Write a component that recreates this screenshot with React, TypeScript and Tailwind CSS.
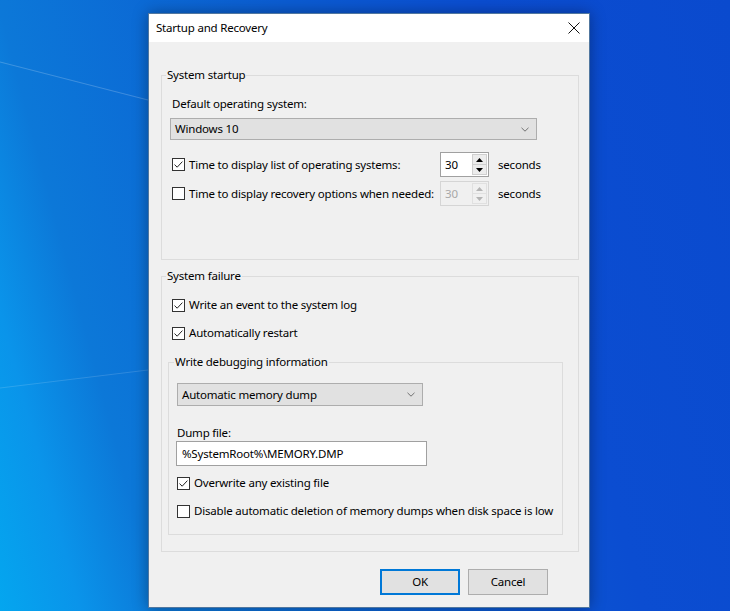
import type { ReactNode } from "react";

function Wallpaper() {
  return (
    <svg className="absolute inset-0" width="730" height="611" viewBox="0 0 730 611">
      <line x1="0" y1="62" x2="148" y2="100" stroke="rgba(255,255,255,0.2)" strokeWidth="1.2" />
      <line x1="0" y1="388" x2="148" y2="370" stroke="rgba(255,255,255,0.14)" strokeWidth="1.2" />
    </svg>
  );
}

function CheckBox({ checked = false }: { checked?: boolean }) {
  return (
    <svg width="13" height="13" viewBox="0 0 13 13" className="shrink-0">
      <rect x="0.5" y="0.5" width="12" height="12" fill="#fff" stroke="#333" />
      {checked && (
        <path d="M2.5 6.6 L5.2 9.2 L10.4 3.6" fill="none" stroke="#222" strokeWidth="1" />
      )}
    </svg>
  );
}

function CheckRow({ checked, children, className = "" }: { checked?: boolean; children: ReactNode; className?: string }) {
  return (
    <label className={`flex h-4 items-center gap-[4px] whitespace-nowrap ${className}`}>
      <CheckBox checked={checked} />
      <span>{children}</span>
    </label>
  );
}

function Chevron() {
  return (
    <svg width="8" height="5" viewBox="0 0 8 5">
      <path d="M0.5 0.8 L4 4.2 L7.5 0.8" fill="none" stroke="#707070" strokeWidth="1" />
    </svg>
  );
}

function ComboBox({ value, className }: { value: string; className: string }) {
  return (
    <div className={`flex items-center justify-between border border-[#adadad] bg-[#e1e1e1] pl-[4px] pr-[7px] ${className}`}>
      <span>{value}</span>
      <Chevron />
    </div>
  );
}

function Arrow({ up, color }: { up?: boolean; color: string }) {
  return (
    <svg width="7" height="4" viewBox="0 0 7 4">
      <path d={up ? "M0 4 L3.5 0 L7 4 Z" : "M0 0 L7 0 L3.5 4 Z"} fill={color} />
    </svg>
  );
}

function Spinner({ disabled = false }: { disabled?: boolean }) {
  return (
    <div
      className={`flex h-[25px] w-[49px] border ${
        disabled ? "border-[#d5d5d5] bg-[#f0f0f0] text-[#a8a8a8]" : "border-[#a0a0a0] bg-white"
      }`}
    >
      <div className="flex flex-1 items-center pl-[4px]">30</div>
      <div className={`my-[1px] mr-[1px] flex w-[15px] flex-col border ${disabled ? "border-[#e0e0e0]" : "border-[#cfcfcf]"}`}>
        <div className={`flex flex-1 items-center justify-center ${disabled ? "bg-[#f0f0f0]" : "bg-[#ececec]"}`}>
          <Arrow up color={disabled ? "#b4b4b4" : "#000"} />
        </div>
        <div className={`flex flex-1 items-center justify-center border-t ${disabled ? "border-[#e0e0e0] bg-[#f0f0f0]" : "border-[#cfcfcf] bg-[#ececec]"}`}>
          <Arrow color={disabled ? "#b4b4b4" : "#000"} />
        </div>
      </div>
    </div>
  );
}

function GroupBox({
  label,
  labelLeft = "left-[4px]",
  className,
  children,
}: {
  label: string;
  labelLeft?: string;
  className: string;
  children: ReactNode;
}) {
  return (
    <div className={`relative border border-[#dcdcdc] ${className}`}>
      <span className={`absolute -top-[9px] bg-[#f0f0f0] px-[1px] leading-4 ${labelLeft}`}>{label}</span>
      {children}
    </div>
  );
}

function DialogButton({ children, primary = false }: { children: ReactNode; primary?: boolean }) {
  return (
    <button
      type="button"
      className={`flex h-[26px] w-[80px] items-center justify-center border bg-[#e1e1e1] ${
        primary ? "border-[#0078d7] shadow-[inset_0_0_0_1px_#0078d7]" : "border-[#adadad]"
      }`}
    >
      {children}
    </button>
  );
}

export default function App() {
  return (
    <div className="relative h-[611px] w-[730px] overflow-hidden bg-[linear-gradient(75deg,#04a6ef_0%,#0a94ea_9%,#0c78d8_18%,#0b5cd2_50%,#0b4dd1_72%,#0a4ace_100%)] pl-[148px] pt-[13px] font-['Noto_Sans',sans-serif] text-[11.5px] leading-4 tracking-[-0.2px] text-black">
      <Wallpaper />

      <div className="relative flex h-[595px] w-[442px] flex-col border border-[#51779f] bg-[#f0f0f0] shadow-[0_0_14px_rgba(0,0,0,0.35)]">
        <div className="flex h-[28px] items-center justify-between bg-white pl-[7px] pr-[9px]">
          <span>Startup and Recovery</span>
          <svg width="12" height="12" viewBox="0 0 12 12">
            <path d="M0.5 0.5 L11.5 11.5 M11.5 0.5 L0.5 11.5" stroke="#111" strokeWidth="1" />
          </svg>
        </div>

        <GroupBox label="System startup" className="ml-[12px] mt-[33px] h-[185px] w-[418px]">
          <div className="flex flex-col pl-[8px] pt-[20px]">
            <div className="ml-[2px]">Default operating system:</div>
            <ComboBox value="Windows 10" className="mt-[6px] h-[22px] w-[367px]" />
            <div className="mt-[12px] flex h-[25px] items-center">
              <CheckRow checked className="ml-[2px] w-[268px]">
                Time to display list of operating systems:
              </CheckRow>
              <Spinner />
              <span className="ml-[9px]">seconds</span>
            </div>
            <div className="mt-[4px] flex h-[25px] items-center">
              <CheckRow className="ml-[2px] w-[268px]">Time to display recovery options when needed:</CheckRow>
              <Spinner disabled />
              <span className="ml-[9px]">seconds</span>
            </div>
          </div>
        </GroupBox>

        <GroupBox label="System failure" className="ml-[12px] mt-[16px] h-[276px] w-[418px]">
          <div className="flex flex-col pl-[6px] pt-[20px]">
            <CheckRow checked className="ml-[4px]">
              Write an event to the system log
            </CheckRow>
            <CheckRow checked className="ml-[4px] mt-[12px]">
              Automatically restart
            </CheckRow>

            <GroupBox
              label="Write debugging information"
              labelLeft="left-[5px]"
              className="mt-[21px] h-[173px] w-[395px]"
            >
              <div className="flex flex-col pl-[7px] pt-[20px]">
                <ComboBox value="Automatic memory dump" className="ml-[1px] h-[23px] w-[246px]" />
                <div className="ml-[1px] mt-[19px]">Dump file:</div>
                <div className="flex h-[25px] w-[251px] items-center border border-[#a0a0a0] bg-white pl-[5px]">
                  %SystemRoot%\MEMORY.DMP
                </div>
                <CheckRow checked className="ml-[1px] mt-[9px]">
                  Overwrite any existing file
                </CheckRow>
                <CheckRow className="ml-[1px] mt-[12px]">
                  Disable automatic deletion of memory dumps when disk space is low
                </CheckRow>
              </div>
            </GroupBox>
          </div>
        </GroupBox>

        <div className="mt-[17px] flex justify-end gap-[8px] pr-[41px]">
          <DialogButton primary>OK</DialogButton>
          <DialogButton>Cancel</DialogButton>
        </div>
      </div>
    </div>
  );
}
